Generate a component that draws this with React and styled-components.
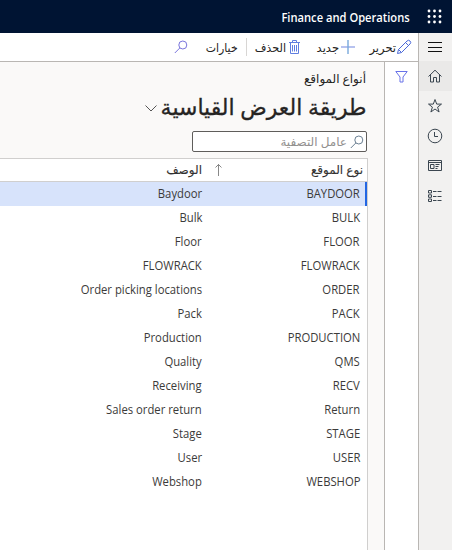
import React from 'react';
import styled, { createGlobalStyle } from 'styled-components';

const Global = createGlobalStyle`
  * { box-sizing: border-box; }
  body { margin: 0; overflow: hidden; font-family: "Open Sans", "DejaVu Sans", sans-serif; color: #252423; }
  svg { display: block; flex: none; fill: none; }
`;
const Page = styled.div`
  width: 452px; height: 550px; display: flex; flex-direction: column; background: #fff; direction: rtl;
`;
const TopBar = styled.header`
  height: 33px; flex: none; background: #001433; display: flex; align-items: center; padding-right: 10px;
`;
const Brand = styled.div`
  margin-right: 17px; width: 129px; direction: ltr; display: flex; justify-content: flex-end;
  padding-top: 2px;
  color: #fff; font: 600 12.5px/18px "Open Sans", sans-serif; white-space: nowrap;
`;
const Body = styled.div`
  flex: 1; display: flex; min-height: 0;
`;
const Rail = styled.nav`
  width: 34px; flex: none; background: #f2f1f0; border-left: 1px solid #b9b6b3; direction: ltr;
`;
const RailItem = styled.div`
  height: ${p => p.$h || 30}px; display: flex; align-items: center; justify-content: center;
  padding: ${p => p.$top || 0}px 1px 0 0; background: ${p => (p.$active ? '#eae9e8' : 'transparent')};
`;
const Main = styled.main`
  flex: 1; min-width: 0; display: flex; flex-direction: column;
`;
const Toolbar = styled.div`
  height: 29px; flex: none; border-bottom: 1px solid #b9b6b3; display: flex; align-items: center; padding-right: 6px;
`;
const ToolIcon = styled.span`
  width: ${p => p.$w}px; flex: none; display: flex; justify-content: center;
`;
const ToolLabel = styled.span`
  width: ${p => p.$w}px; margin-right: ${p => p.$gap}px; margin-left: ${p => p.$after || 0}px; flex: none;
  padding-top: 2px; font-size: 11.5px; line-height: 22px; white-space: nowrap;
`;
const Divider = styled.span`
  width: 1px; height: 18px; background: #d8d6d4;
`;
const Workspace = styled.div`
  flex: 1; display: flex; min-height: 0;
`;
const FilterPane = styled.aside`
  width: 34px; flex: none; border-left: 1px solid #b9b6b3; display: flex; justify-content: center; padding-top: 9px;
`;
const Content = styled.section`
  flex: 1; min-width: 0; background: #faf9f8; padding-right: 16px; display: flex; flex-direction: column;
`;
const Squeeze = styled.span`
  display: inline-block; transform: scaleX(${p => p.$x || 1}); transform-origin: right;
  white-space: nowrap;
`;
const Caption = styled.div`
  height: 18px; margin-top: 8px; padding-right: 2px; font-size: 12px; line-height: 18px;
`;
const Title = styled.h1`
  margin: 0; height: 36px; padding-right: 2px; display: flex; align-items: center;
  font-size: 22px; line-height: 36px; font-weight: 400; -webkit-text-stroke: 0.3px #252423;
`;
const TitleText = styled.span`
  width: 206px; flex: none; white-space: nowrap; margin-left: 3px;
`;
const TitleArrow = styled.span`
  padding-top: 4px;
`;
const Search = styled.div`
  width: 175px; height: 21px; margin: 7px 1px 0 0; border: 1px solid #5f5d5b; border-radius: 2px; background: #fff;
  display: flex; align-items: center; padding-right: 2px; gap: 3px; color: #92908e; font-size: 12px; line-height: 19px;
`;
const Table = styled.div`
  flex: 1; margin-top: 6px; border-top: 1px solid #d0cfce; border-right: 1px solid #d0cfce; background: #fff;
`;
const HeadRow = styled.div`
  height: 23px; display: flex; border-bottom: 1px solid #d0cfce; font-size: 12px; line-height: 24px; padding-right: 4px;
  color: #323130; -webkit-text-stroke: 0.1px #323130;
`;
const HeadCell = styled.div`
  width: ${p => p.$w}px; display: flex; align-items: center; white-space: nowrap;
`;
const Row = styled.div`
  height: 24px; display: flex; font-size: 12px; line-height: 24px; color: #3b3a39;
  padding-right: ${p => (p.$selected ? 5 : 7)}px;
  background: ${p => (p.$selected ? '#d7e3fb' : '#fff')};
  border-right: ${p => (p.$selected ? '2px solid #2266e3' : '0')};
`;
const Cell = styled.div`
  width: 158px; flex: none; white-space: nowrap; font-family: "Open Sans", sans-serif;
`;

const RailIcon = ({ children }) => (
  <svg width="16" height="16" viewBox="0 0 16 16" stroke="#3b4650" strokeWidth="1">{children}</svg>
);
const Waffle = () => (
  <svg width="15" height="15" viewBox="0 0 15 15">
    {[2, 7.5, 13].map(y => [2, 7.5, 13].map(x => <circle key={`${x}-${y}`} cx={x} cy={y} r="1.4" fill="#fff" />))}
  </svg>
);
const Magnifier = ({ color }) => (
  <svg width="14" height="14" viewBox="0 0 14 14" stroke={color} strokeWidth="1">
    <circle cx="8.8" cy="5" r="4" /><path d="M5.9 7.9L.8 13" />
  </svg>
);

const rows = [
  ['BAYDOOR', 'Baydoor'], ['BULK', 'Bulk'], ['FLOOR', 'Floor'], ['FLOWRACK', 'FLOWRACK'],
  ['ORDER', 'Order picking locations'], ['PACK', 'Pack'], ['PRODUCTION', 'Production'], ['QMS', 'Quality'],
  ['RECV', 'Receiving'], ['Return', 'Sales order return'], ['STAGE', 'Stage'], ['USER', 'User'], ['WEBSHOP', 'Webshop'],
];

export default function App() {
  return (
    <Page>
      <Global />
      <TopBar>
        <Waffle />
        <Brand><Squeeze $x={0.893}>Finance and Operations</Squeeze></Brand>
      </TopBar>
      <Body>
        <Rail>
          <RailItem $h={28} $top={2}><RailIcon><path stroke="#111" d="M1 2.5h14M1 7.5h14M1 11.5h14" /></RailIcon></RailItem>
          <RailItem $active><RailIcon><path d="M1.5 8.500L8 2.200l6.500 6.300M3.500 7v7h3v-4.500h3V14h3V7" /></RailIcon></RailItem>
          <RailItem><RailIcon><path d="M8 1.500l1.700 4.600h4.800l-3.900 3 1.500 4.900L8 11l-4.100 3 1.500-4.900-3.900-3h4.800z" /></RailIcon></RailItem>
          <RailItem><RailIcon><circle cx="8" cy="8" r="6.800" /><path d="M7.500 4v4.500h3.500" /></RailIcon></RailItem>
          <RailItem><RailIcon><path d="M1.500 2.500h13v10h-13zM1.500 4.500h13M3.500 6.500h3.500v4h-3.500zM8.500 6.500h4M8.500 8.500h3M8.500 10.500h2" /></RailIcon></RailItem>
          <RailItem><RailIcon><path d="M1.500 2.500h3v2.500h-3zM1.500 6.800h3v2.500h-3zM1.500 11h3v2.500h-3z" /><path strokeDasharray="3.500 1 4 0" d="M6 3.500h8.500M6 8.500h8.500M6 12.500h8.500" /></RailIcon></RailItem>
        </Rail>
        <Main>
          <Toolbar>
            <ToolIcon $w={16}>
              <svg width="16" height="16" viewBox="0 0 16 16" stroke="#4a68d8"><path d="M1.500 14.500l1-4L11 2a2 2 0 0 1 3 3l-8.500 8.500zM2.500 10.500l3 3M9.500 3.500l3 3" /></svg>
            </ToolIcon>
            <ToolLabel $w={26} $gap={0} $after={15}>تحرير</ToolLabel>
            <ToolIcon $w={14}>
              <svg width="14" height="14" viewBox="0 0 14 14" strokeWidth="1.400"><path stroke="#98a8e8" d="M0 7h14" /><path stroke="#78a8dc" d="M7 0v14" /></svg>
            </ToolIcon>
            <ToolLabel $w={23} $gap={2} $after={16}>جديد</ToolLabel>
            <ToolIcon $w={11}>
              <svg width="11" height="14" viewBox="0 0 11 14" stroke="#5f7ee0"><path d="M0 2.500h11M3.500 2V.5h4V2M1.500 3v10.500h8V3M3.500 5v6.500M5.500 5v6.500M7.500 5v6.500" /></svg>
            </ToolIcon>
            <ToolLabel $w={32} $gap={3} $after={7}><Squeeze $x={0.98}>الحذف</Squeeze></ToolLabel>
            <Divider />
            <ToolLabel $w={33} $gap={8} $after={17}><Squeeze $x={0.95}>خيارات</Squeeze></ToolLabel>
            <Magnifier color="#7a75dc" />
          </Toolbar>
          <Workspace>
            <FilterPane>
              <svg width="13" height="12" viewBox="0 0 13 12" stroke="#6872e8"><path d="M.8.500h11.400L8 6v5H5V6z" /></svg>
            </FilterPane>
            <Content>
              <Caption><Squeeze>أنواع المواقع</Squeeze></Caption>
              <Title>
                <TitleText><Squeeze $x={0.997}>طريقة العرض القياسية</Squeeze></TitleText>
                <TitleArrow><svg width="12" height="7" viewBox="0 0 12 7" stroke="#555"><path d="M.5.500L6 6l5.500-5.500" /></svg></TitleArrow>
              </Title>
              <Search><Magnifier color="#6a7f92" /><Squeeze>عامل التصفية</Squeeze></Search>
              <Table>
                <HeadRow>
                  <HeadCell $w={141}><Squeeze>نوع الموقع</Squeeze></HeadCell>
                  <HeadCell $w={20}>
                    <svg width="7" height="12" viewBox="0 0 7 12" stroke="#888"><path d="M3.500 0v12M.5 3.500l3-3 3 3" /></svg>
                  </HeadCell>
                  <HeadCell $w={80}><Squeeze>الوصف</Squeeze></HeadCell>
                </HeadRow>
                {rows.map(([type, description], i) => (
                  <Row key={type} $selected={i === 0}>
                    <Cell><Squeeze $x={0.94}>{type}</Squeeze></Cell>
                    <Cell><Squeeze $x={0.94}>{description}</Squeeze></Cell>
                  </Row>
                ))}
              </Table>
            </Content>
          </Workspace>
        </Main>
      </Body>
    </Page>
  );
}
